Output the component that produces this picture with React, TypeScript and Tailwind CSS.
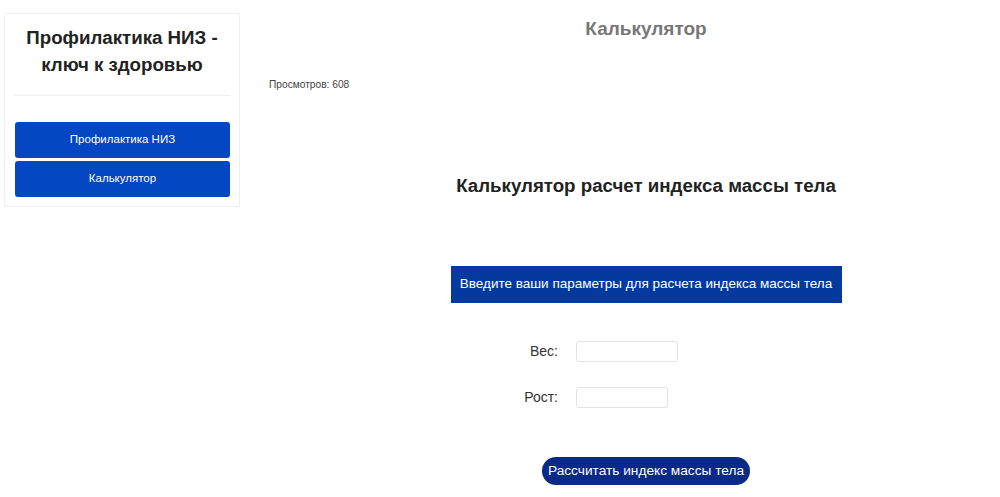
import React from 'react';

const font = { fontFamily: '"Liberation Sans", Arial, sans-serif' };

function Sidebar() {
  return (
    <aside className="ml-[4px] mt-[13px] w-[236px] shrink-0 self-start rounded-[2px] border border-[#eeeeee] bg-white pb-[9px]">
      <h1 className="px-3 pt-[10px] text-center text-[18.7px] font-bold leading-[27px] text-[#222222]">
        Профилактика НИЗ -<br />ключ к здоровью
      </h1>
      <hr className="mx-[9px] mt-[17px] border-t border-[#eeeeee]" />
      <nav className="mt-[26px] flex flex-col gap-[3px] pl-[10px] pr-[9px]">
        <a className="flex h-[36px] items-center justify-center rounded-[3px] bg-[#0447c2] text-[11.5px] text-white">
          Профилактика НИЗ
        </a>
        <a className="flex h-[36px] items-center justify-center rounded-[3px] bg-[#0447c2] text-[11.5px] text-white">
          Калькулятор
        </a>
      </nav>
    </aside>
  );
}

function Field({ label, width }: { label: string; width: string }) {
  return (
    <div className="flex items-center">
      <label className="w-[85px] pr-[18px] text-right text-[14px] text-[#333333]">{label}</label>
      <input type="text" className={`h-[21px] ${width} rounded-[3px] border border-[#e2e2e2] bg-white`} />
    </div>
  );
}

export default function App() {
  return (
    <div className="flex min-h-[497px] bg-white" style={font}>
      <Sidebar />
      <main className="flex-1">
        <div className="pl-[52px] pt-[17px] text-center">
          <h2 className="text-[19px] font-bold leading-[24px] text-[#777777]">Калькулятор</h2>
        </div>
        <p className="ml-[29px] mt-[37px] text-[10.2px] leading-[14px] text-[#444444]">Просмотров: 608</p>
        <div className="flex flex-col items-center pl-[52px]">
          <h3 className="mt-[83px] text-[18.7px] font-bold leading-[22px] text-[#222222]">
            Калькулятор расчет индекса массы тела
          </h3>
          <div className="mt-[69px] flex h-[37px] w-[391px] items-center justify-center whitespace-nowrap bg-[#043a9e] text-[13.5px] text-white">
            Введите ваши параметры для расчета индекса массы тела
          </div>
        </div>
        <div className="ml-[251px] mt-[38px] flex flex-col gap-[25px]">
          <Field label="Вес:" width="w-[102px]" />
          <Field label="Рост:" width="w-[92px]" />
        </div>
        <div className="flex justify-center pl-[52px]">
          <button className="mt-[49px] h-[28px] rounded-full bg-[#0a2a86] px-[5.5px] text-[13.7px] text-white">
            Рассчитать индекс массы тела
          </button>
        </div>
      </main>
    </div>
  );
}
